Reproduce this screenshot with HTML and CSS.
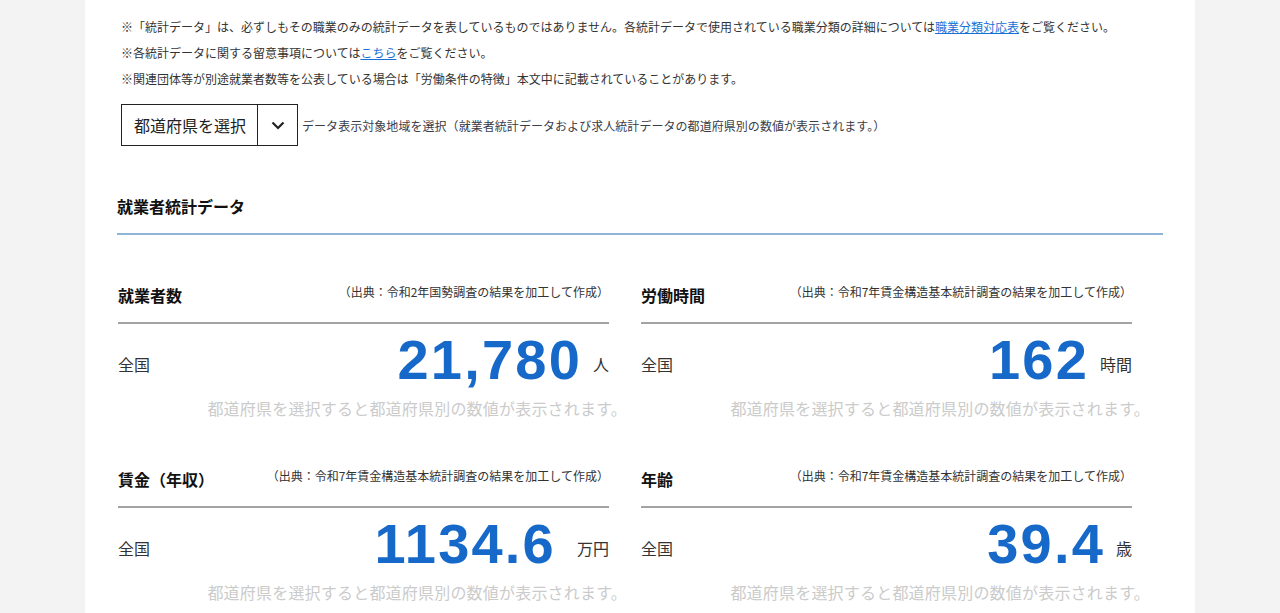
FILE: index.html
```html
<!DOCTYPE html>
<html lang="ja">
<head>
    <meta charset="UTF-8">
    <meta name="viewport" content="width=device-width, initial-scale=1.0">
    <title>就業者統計データ</title>
    <link rel="stylesheet" href="styles.css">
</head>
<body>
    <div class="container">
        <ul class="notes">
            <li>※「統計データ」は、必ずしもその職業のみの統計データを表しているものではありません。各統計データで使用されている職業分類の詳細については<a href="#">職業分類対応表</a>をご覧ください。</li>
            <li>※各統計データに関する留意事項については<a href="#">こちら</a>をご覧ください。</li>
            <li>※関連団体等が別途就業者数等を公表している場合は「労働条件の特徴」本文中に記載されていることがあります。</li>
        </ul>

        <div class="area-select">
            <div class="select-box">
                <span class="select-label">都道府県を選択</span>
                <span class="select-arrow">
                    <svg width="14" height="9" viewBox="0 0 14 9"><path d="M1.5 1.5 L7 7 L12.5 1.5" fill="none" stroke="#222" stroke-width="2.2"/></svg>
                </span>
            </div>
            <span class="select-help">データ表示対象地域を選択（就業者統計データおよび求人統計データの都道府県別の数値が表示されます。）</span>
        </div>

        <h2 class="section-title">就業者統計データ</h2>

        <div class="stats">
            <div class="stat">
                <div class="stat-head">
                    <h3>就業者数</h3>
                    <span class="source">（出典：令和2年国勢調査の結果を加工して作成）</span>
                </div>
                <div class="stat-row">
                    <span class="stat-label">全国</span>
                    <span class="stat-value">21,780</span>
                    <span class="stat-unit">人</span>
                </div>
                <p class="stat-note">都道府県を選択すると都道府県別の数値が表示されます。</p>
            </div>
            <div class="stat">
                <div class="stat-head">
                    <h3>労働時間</h3>
                    <span class="source">（出典：令和7年賃金構造基本統計調査の結果を加工して作成）</span>
                </div>
                <div class="stat-row">
                    <span class="stat-label">全国</span>
                    <span class="stat-value">162</span>
                    <span class="stat-unit">時間</span>
                </div>
                <p class="stat-note">都道府県を選択すると都道府県別の数値が表示されます。</p>
            </div>
            <div class="stat">
                <div class="stat-head">
                    <h3>賃金（年収）</h3>
                    <span class="source">（出典：令和7年賃金構造基本統計調査の結果を加工して作成）</span>
                </div>
                <div class="stat-row">
                    <span class="stat-label">全国</span>
                    <span class="stat-value wide-gap">1134.6</span>
                    <span class="stat-unit">万円</span>
                </div>
                <p class="stat-note">都道府県を選択すると都道府県別の数値が表示されます。</p>
            </div>
            <div class="stat">
                <div class="stat-head">
                    <h3>年齢</h3>
                    <span class="source">（出典：令和7年賃金構造基本統計調査の結果を加工して作成）</span>
                </div>
                <div class="stat-row">
                    <span class="stat-label">全国</span>
                    <span class="stat-value">39.4</span>
                    <span class="stat-unit">歳</span>
                </div>
                <p class="stat-note">都道府県を選択すると都道府県別の数値が表示されます。</p>
            </div>
        </div>
    </div>
</body>
</html>
```

FILE: styles.css
```css
body {
    margin: 0;
    background-color: #f3f3f3;
    color: #333;
    font-family: "Noto Sans CJK JP", "Noto Sans", sans-serif;
    overflow: hidden;
}
.container {
    width: 1046px;
    margin: 0 auto;
    padding: 14px 32px 40px;
    background-color: #fff;
    min-height: 600px;
}
.notes {
    list-style: none;
    margin: 0;
    padding: 0 0 0 4px;
    font-size: 12px;
    line-height: 26px;
    color: #333;
}
.notes a {
    color: #1a6fd6;
    text-decoration: underline;
}
.area-select {
    display: flex;
    align-items: center;
    margin: 12px 0 0 4px;
}
.select-box {
    display: flex;
    height: 40px;
    border: 1px solid #222;
    color: #222;
}
.select-label {
    display: flex;
    align-items: center;
    padding: 0 11px 0 12px;
    font-size: 16px;
    border-right: 1px solid #222;
}
.select-arrow {
    display: flex;
    align-items: center;
    justify-content: center;
    width: 39px;
}
.select-help {
    margin-left: 4px;
    font-size: 12px;
    letter-spacing: 0.05px;
    color: #3a3d4a;
}
.section-title {
    margin: 48px 0 0;
    padding-bottom: 15px;
    border-bottom: 2px solid #8fb5d6;
    font-size: 16px;
    line-height: 24px;
    font-weight: bold;
    color: #111;
}
.stats {
    display: grid;
    grid-template-columns: 491px 491px;
    column-gap: 32px;
    row-gap: 47px;
    margin: 48px 0 0 1px;
}
.stat-head {
    display: flex;
    justify-content: space-between;
    align-items: flex-start;
    padding-bottom: 15px;
    border-bottom: 2px solid #a3a3a3;
}
.stat-head h3 {
    margin: 0;
    font-size: 16px;
    line-height: 24px;
    font-weight: bold;
    color: #111;
}
.source {
    font-size: 12px;
    line-height: 18px;
    color: #333;
}
.stat-row {
    display: flex;
    align-items: center;
    margin-top: 8px;
    height: 56px;
}
.stat-label {
    flex: 1;
    padding-top: 8px;
    font-size: 16px;
    line-height: 24px;
}
.stat-value {
    font-family: "Liberation Sans", Arial, sans-serif;
    font-weight: bold;
    font-size: 56px;
    line-height: 56px;
    letter-spacing: 2.2px;
    color: #1769c9;
}
.stat-unit {
    margin-left: 11px;
    padding-top: 8px;
    font-size: 16px;
    line-height: 24px;
}
.wide-gap + .stat-unit {
    margin-left: 21px;
}
.stat-note {
    margin: 8px -18px 0 0;
    text-align: right;
    font-size: 16px;
    line-height: 24px;
    letter-spacing: 0.2px;
    color: #cbcbcb;
}
```
